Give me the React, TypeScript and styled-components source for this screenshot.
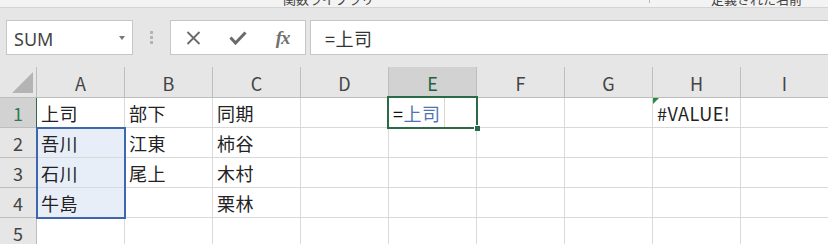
import React from "react";
import styled, { createGlobalStyle } from "styled-components";

const GlobalStyle = createGlobalStyle`
  html, body {
    margin: 0;
    padding: 0;
    background: #ffffff;
    overflow: hidden;
  }
  body {
    font-family: "Noto Sans CJK JP", "Noto Sans", sans-serif;
  }
`;

const COLUMNS = ["A", "B", "C", "D", "E", "F", "G", "H", "I"];

type CellData = { text?: string; error?: boolean };

const ROWS: Record<number, Record<string, CellData>> = {
  1: { A: { text: "上司" }, B: { text: "部下" }, C: { text: "同期" }, H: { text: "#VALUE!", error: true } },
  2: { A: { text: "吾川" }, B: { text: "江東" }, C: { text: "柿谷" } },
  3: { A: { text: "石川" }, B: { text: "尾上" }, C: { text: "木村" } },
  4: { A: { text: "牛島" }, C: { text: "栗林" } },
  5: {},
};

const ACTIVE_COL = "E";
const ACTIVE_ROW = 1;
const REF_COL = "A";
const REF_ROWS = [2, 3, 4];

// grid line 1 is the header row / header column, so sheet row r sits on grid row r + 1
export default function App() {
  return (
    <>
      <GlobalStyle />
      <Window>
        <RibbonEdge>
          <span />
          <GroupLabel>関数ライブラリ</GroupLabel>
          <GroupTick />
          <GroupLabel>定義された名前</GroupLabel>
        </RibbonEdge>

        <FormulaBar>
          <NameBox>
            <span>SUM</span>
            <DropArrow />
          </NameBox>
          <Grip>
            <i />
            <i />
            <i />
          </Grip>
          <FormulaButtons>
            <IconSlot>
              <svg width="15" height="14" viewBox="0 0 15 14">
                <path d="M1.5 1 L13.5 13 M13.5 1 L1.5 13" stroke="#6a6a6a" strokeWidth="1.8" fill="none" />
              </svg>
            </IconSlot>
            <IconSlot>
              <svg width="18" height="14" viewBox="0 0 18 14">
                <path d="M1.5 6.5 L6.5 12 L16.5 1.5" stroke="#6a6a6a" strokeWidth="3" fill="none" />
              </svg>
            </IconSlot>
            <IconSlot>
              <Fx>fx</Fx>
            </IconSlot>
          </FormulaButtons>
          <FormulaInput>=上司</FormulaInput>
        </FormulaBar>

        <Sheet>
          <Corner $row={1} $col={1}>
            <CornerMark />
          </Corner>
          {COLUMNS.map((c, i) => (
            <ColHeader key={c} $row={1} $col={i + 2} $active={c === ACTIVE_COL}>
              {c}
            </ColHeader>
          ))}

          {Object.keys(ROWS).map((key) => {
            const r = Number(key);
            return (
              <React.Fragment key={r}>
                <RowHeader $row={r + 1} $col={1} $active={r === ACTIVE_ROW}>
                  {r}
                </RowHeader>
                {COLUMNS.map((c, i) => {
                  const cell = ROWS[r][c];
                  const inRef = c === REF_COL && REF_ROWS.includes(r);
                  if (c === ACTIVE_COL && r === ACTIVE_ROW) {
                    return (
                      <Cell key={c} $row={r + 1} $col={i + 2}>
                        <EditText>
                          =<RefName>上司</RefName>
                        </EditText>
                        <Caret />
                      </Cell>
                    );
                  }
                  return (
                    <Cell key={c} $row={r + 1} $col={i + 2} $ref={inRef}>
                      {cell?.error && <ErrorFlag />}
                      {cell?.text}
                    </Cell>
                  );
                })}
              </React.Fragment>
            );
          })}

          <RefOutline />
          <ActiveOutline>
            <FillHandle />
          </ActiveOutline>
        </Sheet>
      </Window>
    </>
  );
}

const Window = styled.div`
  width: 828px;
  height: 244px;
  overflow: hidden;
  background: #e6e6e6;
`;

const RibbonEdge = styled.div`
  height: 7px;
  overflow: hidden;
  background: #f3f3f3;
  border-bottom: 1px solid #d4d4d4;
  display: grid;
  grid-template-columns: 283px 366px 62px 1fr;
`;

const GroupLabel = styled.span`
  display: block;
  margin-top: -8px;
  font-size: 13px;
  line-height: 13px;
  color: #444;
  white-space: nowrap;
`;

const GroupTick = styled.span`
  display: block;
  width: 1px;
  height: 3px;
  background: #b8b8b8;
`;

const FormulaBar = styled.div`
  height: 59px;
  box-sizing: border-box;
  padding: 12px 0 0 6px;
  display: flex;
  align-items: flex-start;
  background: #e6e6e6;
`;

const NameBox = styled.div`
  width: 127px;
  height: 35px;
  box-sizing: border-box;
  border: 1px solid #c6c6c6;
  background: #fff;
  display: flex;
  align-items: center;
  justify-content: space-between;
  padding: 2px 7px 0 7px;
  font-family: "Noto Sans", sans-serif;
  font-size: 18px;
  color: #444;
`;

const DropArrow = styled.span`
  width: 0;
  height: 0;
  margin-top: -2px;
  border-left: 3.5px solid transparent;
  border-right: 3.5px solid transparent;
  border-top: 4px solid #777;
`;

const Grip = styled.div`
  width: 37px;
  height: 35px;
  display: flex;
  flex-direction: column;
  align-items: center;
  justify-content: center;
  gap: 2px;

  i {
    display: block;
    width: 3px;
    height: 3px;
    background: #b4b4b4;
  }
`;

const FormulaButtons = styled.div`
  width: 136px;
  height: 35px;
  box-sizing: border-box;
  border: 1px solid #c6c6c6;
  background: #fff;
  display: grid;
  grid-template-columns: repeat(3, 1fr);
`;

const IconSlot = styled.div`
  display: flex;
  align-items: center;
  justify-content: center;
`;

const Fx = styled.span`
  font-family: "Liberation Serif", serif;
  font-style: italic;
  font-weight: 700;
  font-size: 19px;
  color: #707070;
  letter-spacing: -1px;
`;

const FormulaInput = styled.div`
  flex: 1;
  margin-left: 4px;
  margin-right: -2px;
  height: 35px;
  box-sizing: border-box;
  border: 1px solid #c6c6c6;
  background: #fff;
  display: flex;
  align-items: center;
  padding: 0 0 0 14px;
  font-size: 18px;
  color: #333;
  letter-spacing: 0.5px;
`;

const Sheet = styled.div`
  display: grid;
  grid-template-columns: 37px repeat(9, 88px);
  grid-template-rows: 31px repeat(5, 30px);
  background: #fff;
`;

type Placed = { $row: number; $col: number };

const Corner = styled.div<Placed>`
  grid-row: ${(p) => p.$row};
  grid-column: ${(p) => p.$col};
  background: #e6e6e6;
  border-right: 1px solid #bdbdbd;
  border-bottom: 1px solid #bdbdbd;
  display: flex;
  align-items: flex-end;
  justify-content: flex-end;
  padding: 0 3px 4px 0;
`;

const CornerMark = styled.div`
  width: 21px;
  height: 21px;
  background: #b4b4b4;
  clip-path: polygon(100% 0, 100% 100%, 0 100%);
`;

const ColHeader = styled.div<Placed & { $active?: boolean }>`
  grid-row: ${(p) => p.$row};
  grid-column: ${(p) => p.$col};
  background: ${(p) => (p.$active ? "#d2d2d2" : "#e6e6e6")};
  color: ${(p) => (p.$active ? "#1f5f3c" : "#444")};
  border-right: 1px solid #bdbdbd;
  border-bottom: 1px solid #bdbdbd;
  display: flex;
  align-items: center;
  justify-content: center;
  padding-top: 1px;
  font-size: 18px;
`;

const RowHeader = styled.div<Placed & { $active?: boolean }>`
  grid-row: ${(p) => p.$row};
  grid-column: ${(p) => p.$col};
  background: ${(p) => (p.$active ? "#d2d2d2" : "#e6e6e6")};
  color: ${(p) => (p.$active ? "#2f7a52" : "#444")};
  border-right: 1px solid ${(p) => (p.$active ? "#2c6a48" : "#bdbdbd")};
  border-bottom: 1px solid #bdbdbd;
  display: flex;
  align-items: center;
  justify-content: center;
  font-size: 18px;
`;

const Cell = styled.div<Placed & { $ref?: boolean }>`
  grid-row: ${(p) => p.$row};
  grid-column: ${(p) => p.$col};
  position: relative;
  background: ${(p) => (p.$ref ? "#e8eef8" : "#fff")};
  border-right: 1px solid #d9d9d9;
  border-bottom: 1px solid #d9d9d9;
  display: flex;
  align-items: center;
  padding-left: 4px;
  font-size: 18px;
  color: #222;
  letter-spacing: 0.5px;
  white-space: nowrap;
  overflow: visible;
`;

const EditText = styled.span`
  color: #111;
`;

const RefName = styled.span`
  color: #4f74b5;
`;

const Caret = styled.span`
  align-self: stretch;
  width: 1px;
  margin-left: 3px;
  background: #d6d6d6;
`;

const ErrorFlag = styled.span`
  position: absolute;
  left: 0;
  top: 0;
  width: 6px;
  height: 6px;
  background: #1e8c3a;
  clip-path: polygon(0 0, 100% 0, 0 100%);
`;

const RefOutline = styled.div`
  position: relative;
  z-index: 1;
  grid-column: 2;
  grid-row: 3 / 6;
  margin: -1px;
  border: 2px solid #3e67ad;
  pointer-events: none;
`;

const ActiveOutline = styled.div`
  position: relative;
  z-index: 2;
  grid-column: 6;
  grid-row: 2;
  margin: -2px -1px -1px -2px;
  border: 2px solid #2a6a47;
  pointer-events: none;
`;

const FillHandle = styled.span`
  position: absolute;
  right: -4px;
  bottom: -4px;
  width: 5px;
  height: 5px;
  background: #2a6a47;
  border-left: 1px solid #fff;
  border-top: 1px solid #fff;
`;
